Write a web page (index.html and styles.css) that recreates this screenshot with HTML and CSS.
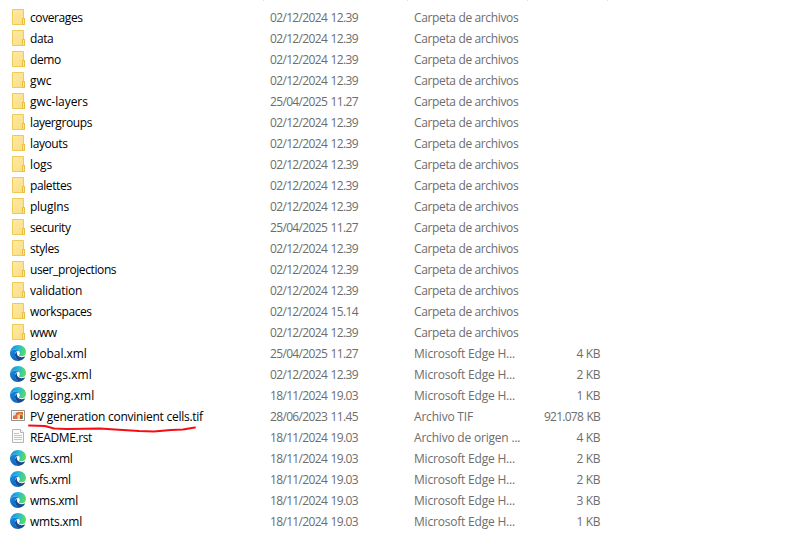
FILE: index.html
```
<!DOCTYPE html>
<html lang="es">
<head>
<meta charset="utf-8">
<title>Archivos</title>
<link rel="stylesheet" href="styles.css">
</head>
<body>
<svg class="defs" aria-hidden="true">
  <defs>
    <linearGradient id="fold" x1="0" y1="0" x2="1" y2="1"><stop offset="0" stop-color="#ffeaa4"/><stop offset="1" stop-color="#fbdc82"/></linearGradient>
    <linearGradient id="top" x1="0" y1="0.3" x2="1" y2="0.5"><stop offset="0" stop-color="#1688d8"/><stop offset="0.45" stop-color="#27b5d8"/><stop offset="0.75" stop-color="#3fcf98"/><stop offset="1" stop-color="#63dc4d"/></linearGradient>
    <linearGradient id="left" x1="0" y1="0" x2="0.6" y2="1"><stop offset="0" stop-color="#168be0"/><stop offset="1" stop-color="#1263b8"/></linearGradient>
    <symbol id="folder" viewBox="0 0 16 16"><path d="M2.5 .5h11v9h1v6h-12z" fill="url(#fold)" stroke="#eecb55"/><path d="M12.5 9.5h2v6h-2z" fill="#ffe79b" stroke="#e8bf43"/></symbol>
    <symbol id="edge" viewBox="0 0 16 16"><path d="M.1 7C.7 2.8 4 0 8 0c4.700 0 8 3.200 8 6.900 0 2.700-2 4.400-4.300 4.400-1.800 0-2.700-.6-2.700-1.100 0-.5.8-.8.8-2.200C9.800 6.100 7.700 4.400 5 4.400 2.500 4.400.6 5.800.1 7z" fill="url(#top)"/><path d="M.1 7C1 5.200 2.700 4.400 5 4.400c1.800 0 3.200.7 4 1.700C6.800 5.600 5 7.400 5 9.800c0 3 2.700 5 5.300 5.800-.7.3-1.500.4-2.300.4-4.400 0-8-3.400-8-8z" fill="url(#left)"/><path d="M7 7.100C5.600 7.800 5 8.700 5 10c0 3 2.700 5.300 5.300 5.600 1.900-.6 3.600-1.900 4.600-3.600.2-.4 0-.6-.4-.4-4 1.800-8.300-.3-7.500-4.500z" fill="#154b91"/></symbol>
    <symbol id="tif" viewBox="0 0 16 16"><path d="M1.500 2.500h13v10h-13z" fill="#fff" stroke="#929292"/><path d="M3 4h10v7H3z" fill="#edaa68"/><path d="M3 4h4L5 7 3 8z" fill="#d8e5e8"/><path d="M6 5l3-1h4v3l-3-2-4 3z" fill="#df682e"/><path d="M3 8l4-1v4H3z" fill="#db704a"/><path d="M8 7h2v4H8z" fill="#f2d1a2"/><path d="M10 7h2v4h-2z" fill="#c6522e"/><path d="M12 8h1v3h-1z" fill="#719451"/></symbol>
    <symbol id="doc" viewBox="0 0 16 16"><path d="M2.500.5h8l3 3v10h-11z" fill="#fbfbfb" stroke="#b4b4b4"/><path d="M10.500.5v3h3" fill="#fff" stroke="#b4b4b4"/><path d="M4 4.500h5M4 6.500h8M4 8.500h8M4 10.500h8" stroke="#c3c7ca" fill="none"/></symbol>
  </defs>
</svg>
<main class="list">
  <div class="head"><i></i><i></i><i></i><i></i></div>
  <div class="row dir"><svg class="icon"><use href="#folder"/></svg><span class="name">coverages</span><span class="date">02/12/2024 12.39</span><span class="type">Carpeta de archivos</span></div>
  <div class="row dir"><svg class="icon"><use href="#folder"/></svg><span class="name">data</span><span class="date">02/12/2024 12.39</span><span class="type">Carpeta de archivos</span></div>
  <div class="row dir"><svg class="icon"><use href="#folder"/></svg><span class="name">demo</span><span class="date">02/12/2024 12.39</span><span class="type">Carpeta de archivos</span></div>
  <div class="row dir"><svg class="icon"><use href="#folder"/></svg><span class="name wide">gwc</span><span class="date">02/12/2024 12.39</span><span class="type">Carpeta de archivos</span></div>
  <div class="row dir"><svg class="icon"><use href="#folder"/></svg><span class="name wide">gwc-layers</span><span class="date">25/04/2025 11.27</span><span class="type">Carpeta de archivos</span></div>
  <div class="row dir"><svg class="icon"><use href="#folder"/></svg><span class="name">layergroups</span><span class="date">02/12/2024 12.39</span><span class="type">Carpeta de archivos</span></div>
  <div class="row dir"><svg class="icon"><use href="#folder"/></svg><span class="name">layouts</span><span class="date">02/12/2024 12.39</span><span class="type">Carpeta de archivos</span></div>
  <div class="row dir"><svg class="icon"><use href="#folder"/></svg><span class="name wide">logs</span><span class="date">02/12/2024 12.39</span><span class="type">Carpeta de archivos</span></div>
  <div class="row dir"><svg class="icon"><use href="#folder"/></svg><span class="name">palettes</span><span class="date">02/12/2024 12.39</span><span class="type">Carpeta de archivos</span></div>
  <div class="row dir"><svg class="icon"><use href="#folder"/></svg><span class="name long">plugIns</span><span class="date">02/12/2024 12.39</span><span class="type">Carpeta de archivos</span></div>
  <div class="row dir"><svg class="icon"><use href="#folder"/></svg><span class="name">security</span><span class="date">25/04/2025 11.27</span><span class="type">Carpeta de archivos</span></div>
  <div class="row dir"><svg class="icon"><use href="#folder"/></svg><span class="name">styles</span><span class="date">02/12/2024 12.39</span><span class="type">Carpeta de archivos</span></div>
  <div class="row dir"><svg class="icon"><use href="#folder"/></svg><span class="name">user_projections</span><span class="date">02/12/2024 12.39</span><span class="type">Carpeta de archivos</span></div>
  <div class="row dir"><svg class="icon"><use href="#folder"/></svg><span class="name long">validation</span><span class="date">02/12/2024 12.39</span><span class="type">Carpeta de archivos</span></div>
  <div class="row dir"><svg class="icon"><use href="#folder"/></svg><span class="name">workspaces</span><span class="date">02/12/2024 15.14</span><span class="type">Carpeta de archivos</span></div>
  <div class="row dir"><svg class="icon"><use href="#folder"/></svg><span class="name">www</span><span class="date">02/12/2024 12.39</span><span class="type">Carpeta de archivos</span></div>
  <div class="row"><svg class="icon"><use href="#edge"/></svg><span class="name wide">global.xml</span><span class="date">25/04/2025 11.27</span><span class="type">Microsoft Edge H...</span><span class="size">4 KB</span></div>
  <div class="row"><svg class="icon"><use href="#edge"/></svg><span class="name loose">gwc-gs.xml</span><span class="date">02/12/2024 12.39</span><span class="type">Microsoft Edge H...</span><span class="size">2 KB</span></div>
  <div class="row"><svg class="icon"><use href="#edge"/></svg><span class="name loose">logging.xml</span><span class="date">18/11/2024 19.03</span><span class="type">Microsoft Edge H...</span><span class="size">1 KB</span></div>
  <div class="row"><svg class="icon"><use href="#tif"/></svg><span class="name long">PV generation convinient cells.tif</span><span class="date">28/06/2023 11.45</span><span class="type">Archivo TIF</span><span class="size long">921.078 KB</span><svg class="mark" viewBox="0 0 172 10"><path d="M2 2.500L18 3l9 2.500 13 .5 33-.5 15 1 24 1.500 15 .5 17-1.500 12-.5 12-2"/></svg></div>
  <div class="row"><svg class="icon"><use href="#doc"/></svg><span class="name">README.rst</span><span class="date">18/11/2024 19.03</span><span class="type">Archivo de origen ...</span><span class="size">4 KB</span></div>
  <div class="row"><svg class="icon"><use href="#edge"/></svg><span class="name long">wcs.xml</span><span class="date">18/11/2024 19.03</span><span class="type">Microsoft Edge H...</span><span class="size">2 KB</span></div>
  <div class="row"><svg class="icon"><use href="#edge"/></svg><span class="name long">wfs.xml</span><span class="date">18/11/2024 19.03</span><span class="type">Microsoft Edge H...</span><span class="size">2 KB</span></div>
  <div class="row"><svg class="icon"><use href="#edge"/></svg><span class="name long">wms.xml</span><span class="date">18/11/2024 19.03</span><span class="type">Microsoft Edge H...</span><span class="size">3 KB</span></div>
  <div class="row"><svg class="icon"><use href="#edge"/></svg><span class="name long">wmts.xml</span><span class="date">18/11/2024 19.03</span><span class="type">Microsoft Edge H...</span><span class="size">1 KB</span></div>
</main>
</body>
</html>
```

FILE: styles.css
```
body {
  margin: 0;
  background: #fff;
  font: 12px/21px "Open Sans", "Noto Sans", sans-serif;
  color: #6d6d6d;
}
.defs { position: absolute; width: 0; height: 0; }
.list { width: 608px; }
.head {
  display: grid;
  grid-template-columns: 264px 144px 120px 80px;
  height: 7px;
}
.head i { height: 1px; border-right: 1px solid #e0e0e0; }
.row {
  position: relative;
  display: grid;
  grid-template-columns: 16px 240px 144px 120px 70px;
  height: 21px;
  padding-left: 10px;
  white-space: nowrap;
}
.icon { width: 16px; height: 16px; margin-top: 2px; }
.name { padding-left: 4px; color: #000; letter-spacing: -0.4px; }
.name.wide { letter-spacing: -0.07px; }
.name.loose { letter-spacing: 0.05px; }
.name.long { letter-spacing: -0.25px; }
.date, .type { padding-left: 4px; }
.date { letter-spacing: -0.66px; word-spacing: 1px; }
.type { letter-spacing: -0.2px; }
.dir .type { letter-spacing: -0.36px; }
.size { text-align: right; letter-spacing: -0.4px; }
.size.long { letter-spacing: -0.75px; word-spacing: 1px; }
.mark {
  position: absolute;
  left: 27px;
  top: 17px;
  width: 172px;
  height: 10px;
  fill: none;
  stroke: #f40d14;
  stroke-width: 1.9;
  stroke-linecap: round;
  stroke-linejoin: round;
}
```
